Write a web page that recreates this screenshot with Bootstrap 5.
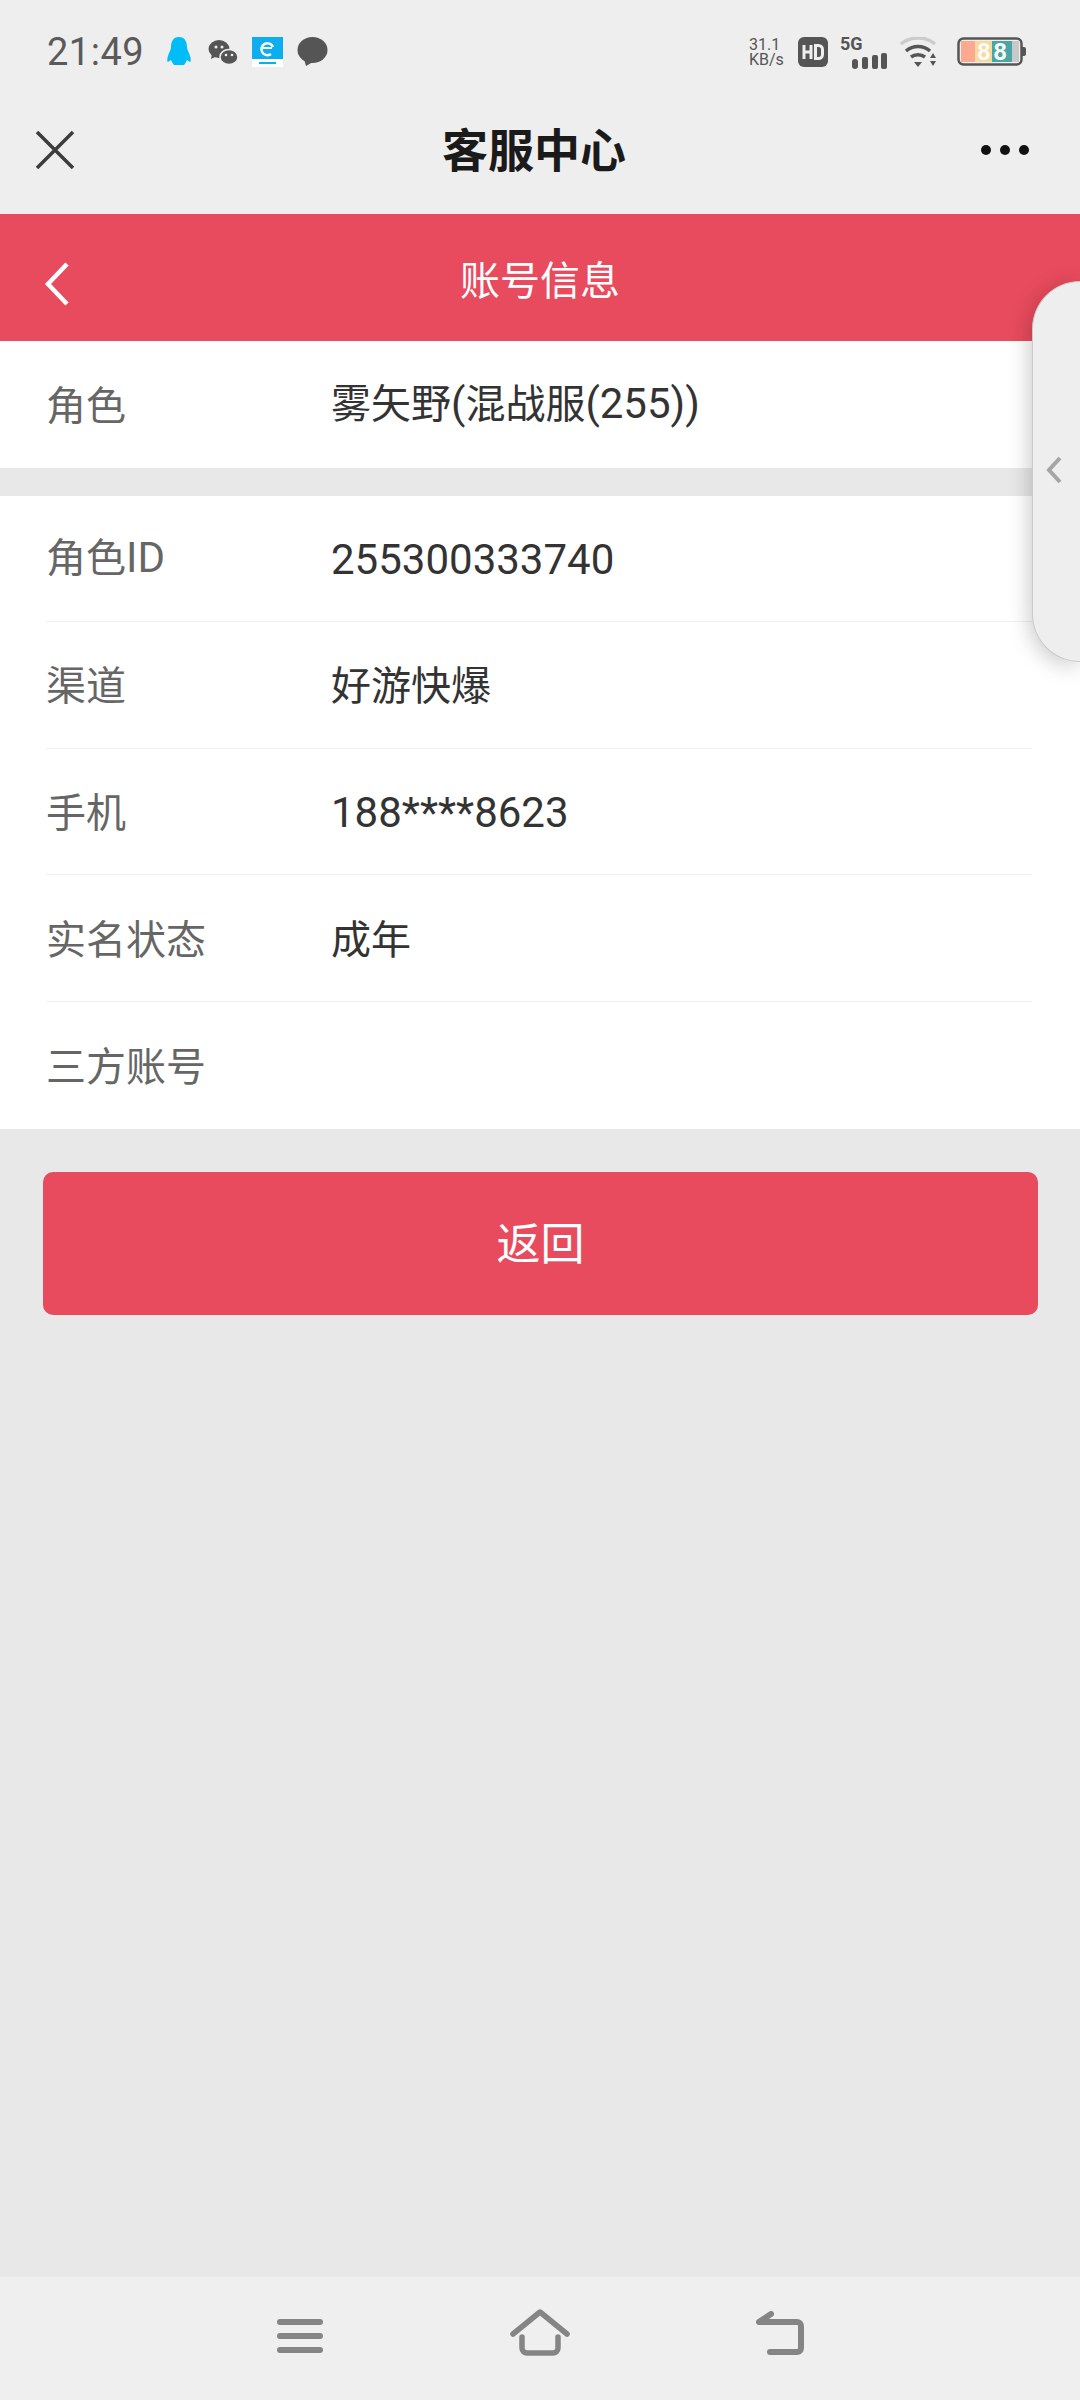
<!DOCTYPE html>
<html lang="zh-CN">
<head>
    <meta charset="UTF-8">
    <meta name="viewport" content="width=device-width, initial-scale=1.0">
    <title>客服中心</title>
    <link href="https://cdn.jsdelivr.net/npm/bootstrap@5.3.0/dist/css/bootstrap.min.css" rel="stylesheet">
    <style>
        html, body { height: 100%; }
        body {
            width: 1080px;
            height: 2400px;
            background: #e8e8e8;
            font-family: "Noto Sans CJK SC", "Noto Sans", sans-serif;
            overflow: hidden;
        }
        .phone { width: 1080px; height: 2400px; position: relative; }
        .status-bar { height: 100px; background: #eeeeee; padding: 4px 53px 0 47px; color: #555; }
        .clock { font-family: Roboto, sans-serif; font-size: 38px; font-weight: 400; letter-spacing: .5px; color: #5a5a5a; margin-right: 21px; }
        .speed { font-family: Roboto, sans-serif; font-size: 16px; line-height: 15px; color: #555; width: 38px; white-space: nowrap; }
        .title-bar { height: 114px; background: #eeeeee; padding: 0 38px 14px 35px; position: relative; }
        .title-text { font-size: 46px; font-weight: 700; color: #1a1a1a; line-height: 1; position: absolute; left: 442px; top: 24px; }
        .red-head { height: 127px; background: #e84b5d; color: #fff; padding: 12px 0 0 44px; position: relative; }
        .head-text { font-size: 40px; line-height: 1; position: absolute; left: 460px; top: 44px; }
        .info-block { background: #fff; padding-left: 46px; }
        .info-block + .info-block { margin-top: 28px; }
        .info-row { height: 126.6px; border-bottom: 1px solid #efefef; margin-right: 48px; padding-bottom: 3px; font-size: 40px; }
        .info-row:last-child { border-bottom: 0; }
        .info-label { width: 285px; color: #666; flex-shrink: 0; }
        .info-value { color: #333; }
        .num-text { font-family: Roboto, "Noto Sans CJK SC", sans-serif; font-size: 42px; }
        .info-value.num-text { padding-top: 5px; }
        .btn-back {
            display: block;
            width: 995px;
            height: 143px;
            margin: 43px 0 0 43px;
            padding-bottom: 10px;
            background: #e84b5d;
            border: 0;
            border-radius: 10px;
            color: #fff;
            font-size: 44px;
        }
        .btn-back:hover, .btn-back:active { background: #e84b5d !important; color: #fff !important; }
        .side-tab {
            position: absolute;
            right: 0;
            top: 281px;
            width: 48px;
            height: 381px;
            background: #eeeeee;
            border-radius: 48px 0 0 48px;
            box-shadow: -2px 4px 22px rgba(0,0,0,.22);
            border: 1px solid #c9c9c9;
            border-right: 0;
        }
        .side-tab svg { position: absolute; left: 12px; top: 173px; }
        .bottom-nav { position: absolute; left: 0; right: 0; bottom: 0; height: 124px; background: #efefef; border-top: 1px solid #ebebeb; }
        .bottom-nav svg { position: absolute; top: 39px; }
    </style>
</head>
<body>
<div class="phone">
    <div class="status-bar d-flex align-items-center">
        <span class="clock">21:49</span>
        <svg width="28" height="32" viewBox="0 0 28 32" style="margin-right:15px"><path d="M14 1c6 0 8 5 8 10 0 3 2 5 3 9 1 3 1 6 0 6l-3-2c-1 2-2 4-3 5H9c-1-1-2-3-3-5l-3 2c-1 0-1-3 0-6 1-4 3-6 3-9C6 6 8 1 14 1z" fill="#00bdf7"/></svg>
        <svg width="31" height="27" viewBox="0 0 31 27" style="margin-right:13px"><ellipse cx="11" cy="10" rx="10.500" ry="9" fill="#555"/><path d="M4 15l-1 5 6-3z" fill="#555"/><ellipse cx="21" cy="18" rx="9" ry="7.500" fill="#555" stroke="#eee" stroke-width="1.500"/><circle cx="8" cy="8" r="1.500" fill="#eee"/><circle cx="14" cy="8" r="1.500" fill="#eee"/><circle cx="18" cy="16" r="1.300" fill="#eee"/><circle cx="24" cy="16" r="1.300" fill="#eee"/></svg>
        <svg width="31" height="30" viewBox="0 0 31 30" style="margin-right:14px"><rect width="31" height="30" fill="#fff"/><path d="M0 0h31v22H0z" fill="#0daef0"/><path d="M21 10a6 6 0 1 0-2 7" fill="none" stroke="#fff" stroke-width="2.500"/><path d="M10 11h10" stroke="#fff" stroke-width="2"/><rect x="7" y="25" width="17" height="2" fill="#0daef0"/></svg>
        <svg width="31" height="30" viewBox="0 0 31 30"><ellipse cx="15.500" cy="13" rx="15" ry="13" fill="#555"/><path d="M7 22l2 7 7-4z" fill="#555"/></svg>
        <div class="ms-auto d-flex align-items-center">
            <div class="speed" style="margin-right:11px">31.1<br>KB/s</div>
            <svg width="30" height="30" viewBox="0 0 30 30" style="margin-right:12px"><rect width="30" height="30" rx="6" fill="#555"/><path d="M6 8v14M13 8v14M6 15h7" stroke="#eee" stroke-width="3" fill="none"/><path d="M17.500 8.500h3a4 4 0 0 1 4 4v5a4 4 0 0 1-4 4h-3z" stroke="#eee" stroke-width="3" fill="none"/></svg>
            <svg width="48" height="36" viewBox="0 0 48 36" style="margin-right:12px;margin-top:-3px"><text x="0" y="17" font-family="Roboto, sans-serif" font-size="18" font-weight="700" fill="#555">5G</text><rect x="12" y="26" width="6" height="10" rx="3" fill="#555"/><rect x="22" y="24" width="6" height="12" rx="2" fill="#555"/><rect x="32" y="22" width="6" height="14" rx="2" fill="#555"/><rect x="41" y="20" width="6" height="16" rx="2" fill="#555"/></svg>
            <svg width="38" height="30" viewBox="0 0 38 30" style="margin-right:19px"><path d="M1 7c9-8 25-8 34 0" stroke="#ccc" stroke-width="3.500" fill="none"/><path d="M6 14c7-6 17-6 24 0" stroke="#555" stroke-width="3.500" fill="none"/><path d="M11 20c4-3 10-3 14 0" stroke="#555" stroke-width="3.500" fill="none"/><path d="M14 25h8l-4 5z" fill="#555"/><path d="M30 21l3-5 3 5zM30 24h6l-3 5z" fill="#555"/></svg>
            <svg width="70" height="30" viewBox="0 0 70 30">
                <rect x="1.500" y="1.500" width="63" height="26" rx="5" fill="#eee" stroke="#555" stroke-width="2.500"/>
                <rect x="4" y="4" width="14" height="21" fill="#fba98f"/>
                <rect x="18" y="4" width="17" height="21" fill="#f8d9a0"/>
                <rect x="35" y="4" width="20" height="21" fill="#4aa6a6"/>
                <rect x="55" y="4" width="7" height="21" fill="#c9c9c9"/>
                <path d="M65 10h2a2 2 0 0 1 2 2v5a2 2 0 0 1-2 2h-2z" fill="#555"/>
                <text x="20" y="23" font-family="Roboto, sans-serif" font-size="24" font-weight="700" fill="#f6fbf4" letter-spacing="2.500">88</text>
            </svg>
        </div>
    </div>

    <div class="title-bar d-flex align-items-center justify-content-between">
        <svg width="40" height="40" viewBox="0 0 40 40"><path d="M2 2l36 36M38 2L2 38" stroke="#3c3c3c" stroke-width="3.500" fill="none"/></svg>
        <span class="title-text">客服中心</span>
        <svg width="50" height="12" viewBox="0 0 50 12" style="margin-right:12px"><circle cx="6" cy="6" r="5" fill="#111"/><circle cx="25" cy="6" r="5" fill="#111"/><circle cx="44" cy="6" r="5" fill="#111"/></svg>
    </div>

    <div class="red-head d-flex align-items-center">
        <svg width="26" height="44" viewBox="0 0 26 44"><path d="M23 2L4 22l19 20" stroke="#fff" stroke-width="4.500" fill="none"/></svg>
        <span class="head-text">账号信息</span>
    </div>

    <div class="info-block">
        <div class="info-row d-flex align-items-center">
            <span class="info-label">角色</span>
            <span class="info-value">雾矢野<span class="num-text">(</span>混战服<span class="num-text">(255))</span></span>
        </div>
    </div>
    <div class="info-block">
        <div class="info-row d-flex align-items-center">
            <span class="info-label">角色<span class="num-text">ID</span></span>
            <span class="info-value num-text">255300333740</span>
        </div>
        <div class="info-row d-flex align-items-center">
            <span class="info-label">渠道</span>
            <span class="info-value">好游快爆</span>
        </div>
        <div class="info-row d-flex align-items-center">
            <span class="info-label">手机</span>
            <span class="info-value num-text">188****8623</span>
        </div>
        <div class="info-row d-flex align-items-center">
            <span class="info-label">实名状态</span>
            <span class="info-value">成年</span>
        </div>
        <div class="info-row d-flex align-items-center">
            <span class="info-label">三方账号</span>
            <span class="info-value"></span>
        </div>
    </div>

    <button type="button" class="btn btn-back">返回</button>

    <div class="side-tab">
        <svg width="18" height="30" viewBox="0 0 18 30"><path d="M15 3L4 15l11 12" stroke="#a5a5a5" stroke-width="4" fill="none"/></svg>
    </div>

    <div class="bottom-nav">
        <svg width="46" height="40" viewBox="0 0 46 40" style="left:277px"><path d="M3 6h40M3 20h40M3 34h40" stroke="#858585" stroke-width="6" stroke-linecap="round" fill="none"/></svg>
        <svg width="60" height="48" viewBox="0 0 60 48" style="left:510px;top:32px"><path d="M3 25L30 3l27 22" stroke="#858585" stroke-width="5.500" stroke-linecap="round" stroke-linejoin="round" fill="none"/><path d="M12 28v11a5 5 0 0 0 5 5h26a5 5 0 0 0 5-5V28" stroke="#858585" stroke-width="5.500" stroke-linecap="round" fill="none"/></svg>
        <svg width="50" height="48" viewBox="0 0 50 48" style="left:756px;top:34px"><path d="M15 3L3 11h38a4 4 0 0 1 4 4v22a4 4 0 0 1-4 4H14" stroke="#858585" stroke-width="6" stroke-linecap="round" stroke-linejoin="round" fill="none"/></svg>
    </div>
</div>
<script src="https://cdn.jsdelivr.net/npm/bootstrap@5.3.0/dist/js/bootstrap.bundle.min.js"></script>
</body>
</html>
